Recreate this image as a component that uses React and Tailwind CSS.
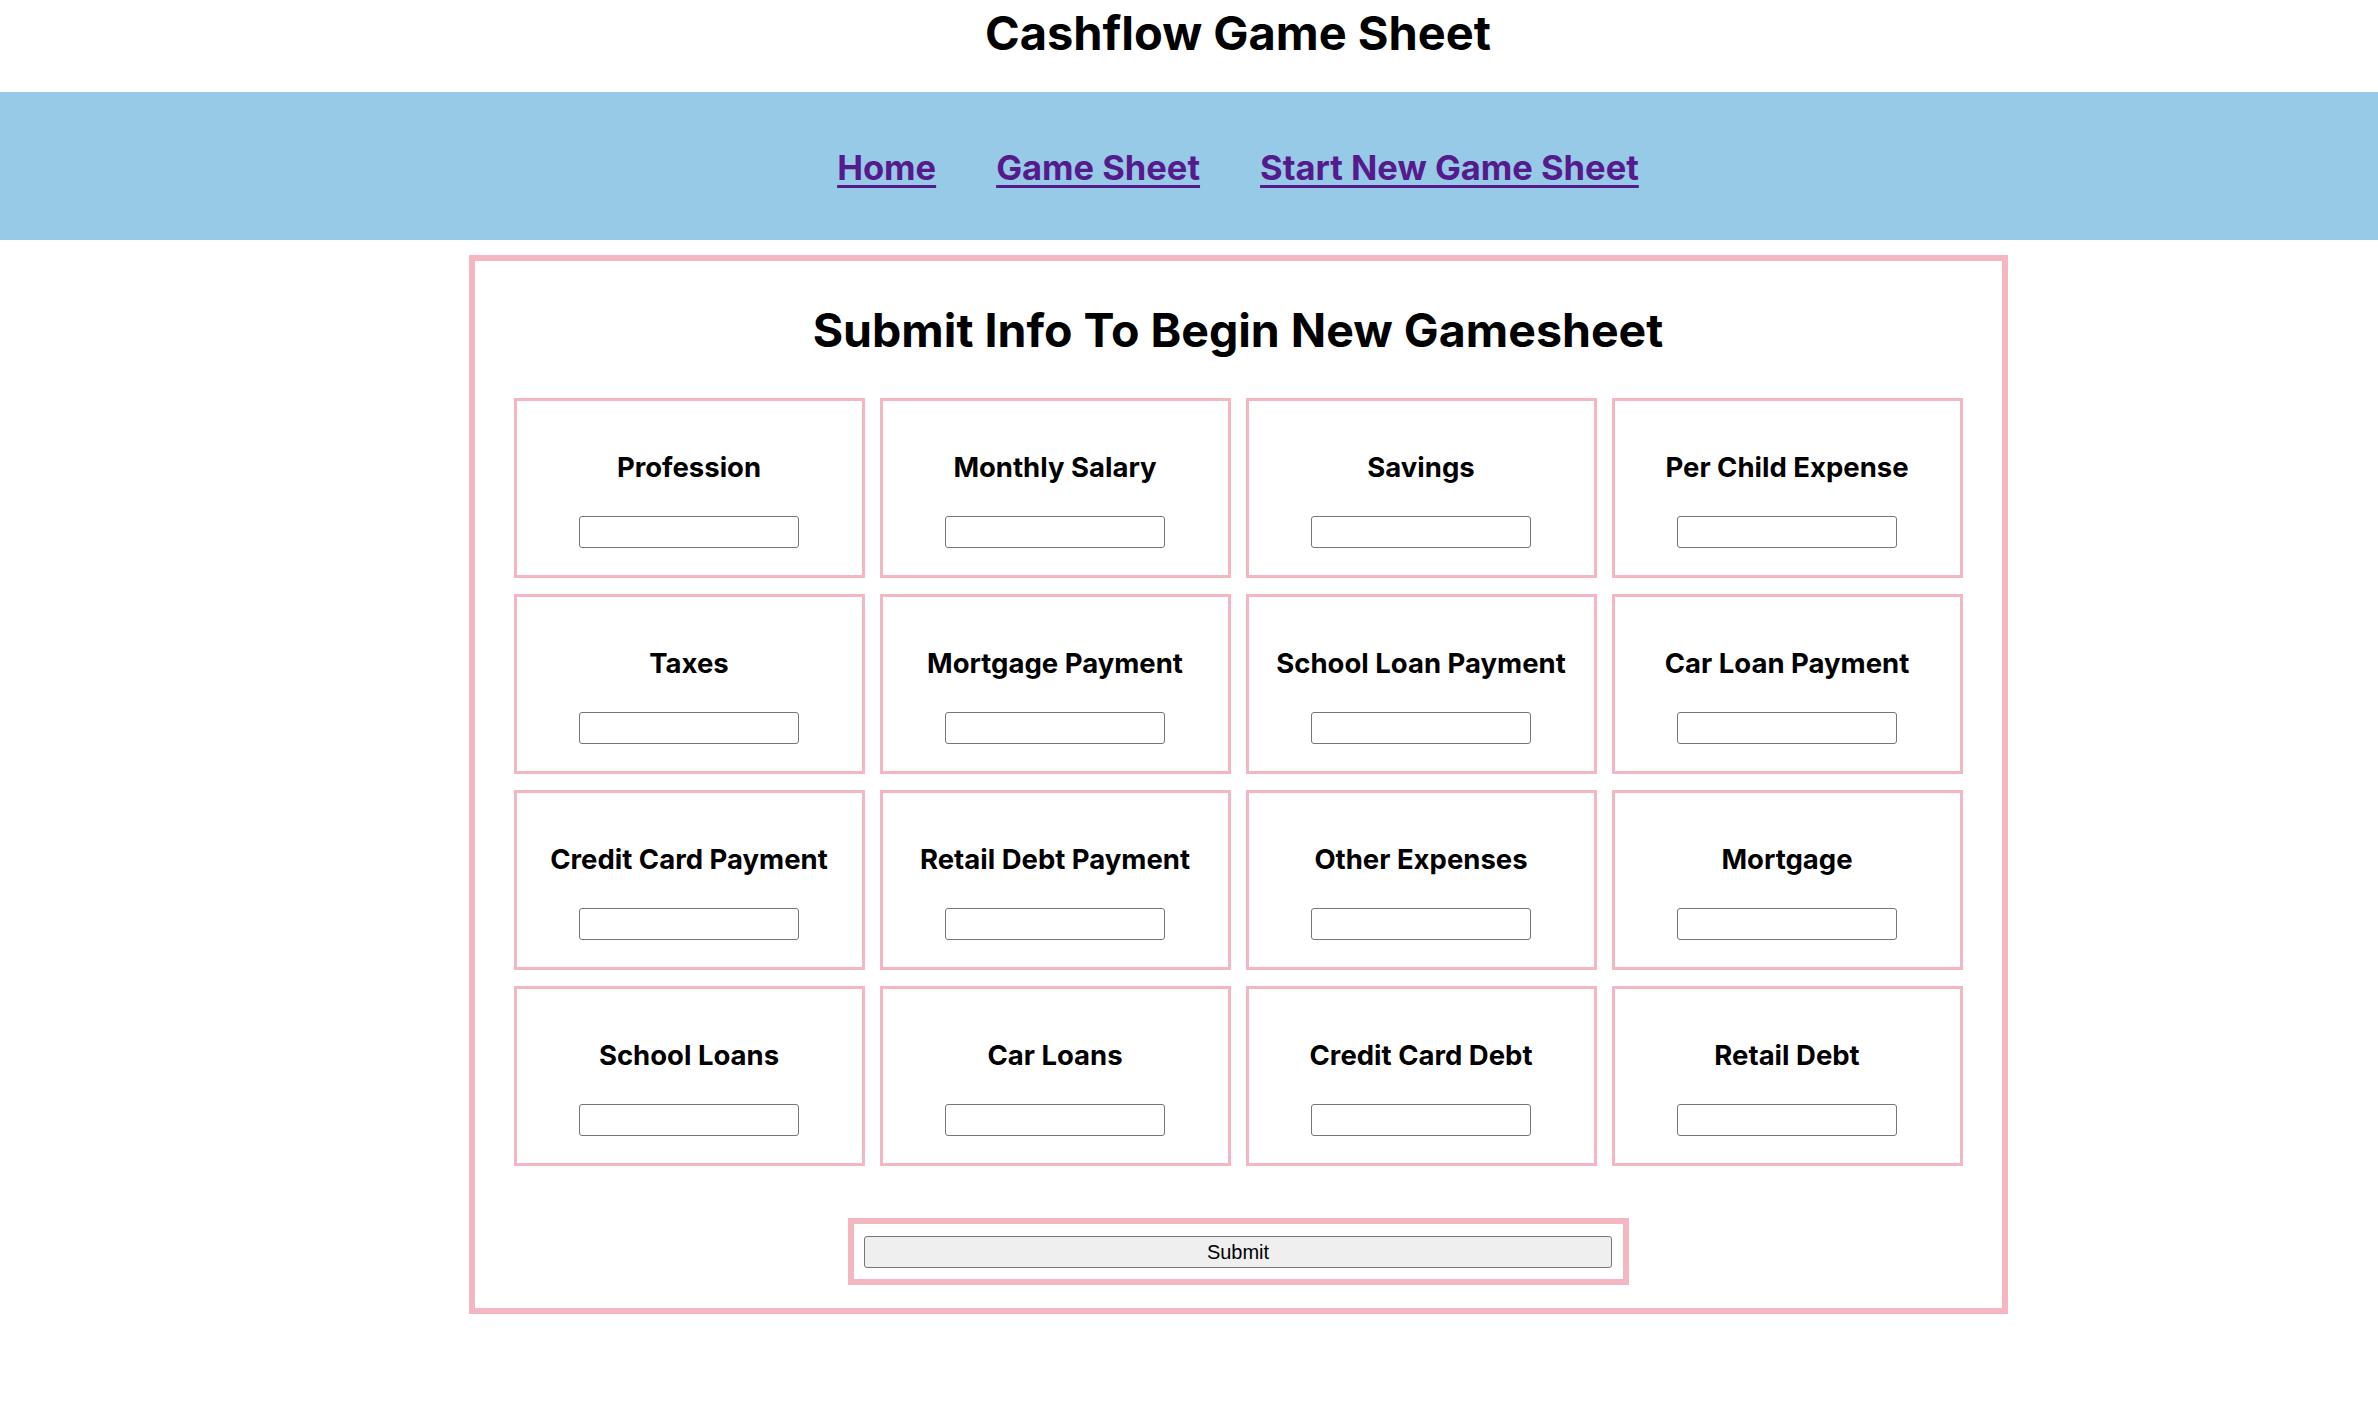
import { useState } from 'react';

const fields = [
  'Profession',
  'Monthly Salary',
  'Savings',
  'Per Child Expense',
  'Taxes',
  'Mortgage Payment',
  'School Loan Payment',
  'Car Loan Payment',
  'Credit Card Payment',
  'Retail Debt Payment',
  'Other Expenses',
  'Mortgage',
  'School Loans',
  'Car Loans',
  'Credit Card Debt',
  'Retail Debt',
];

export default function App() {
  const [values, setValues] = useState({});

  const links = ['Home', 'Game Sheet', 'Start New Game Sheet'];

  return (
    <div className="min-h-screen w-full overflow-hidden bg-white text-black font-['Inter',sans-serif]">
      <div className="w-[2476px]">
        {/* Title */}
        <div className="h-[92px] pt-[9px]">
          <h1 className="text-center text-[47px] font-bold leading-none">Cashflow Game Sheet</h1>
        </div>

        {/* Nav */}
        <nav className="h-[148px] bg-[#97cae7] flex items-center justify-center gap-[60px] pt-[4px]">
          {links.map(label => (
            <a
              key={label}
              href="#"
              className="text-[34.5px] font-bold leading-none text-[#551a8b] underline underline-offset-[5px] decoration-[3px]"
            >
              {label}
            </a>
          ))}
        </nav>

        {/* Form */}
        <form
          className="mx-auto mt-[15px] w-[1539px] border-[6px] border-[#f4b7c2] pt-[46px] pb-[23px]"
          onSubmit={e => e.preventDefault()}
        >
          <h2 className="text-center text-[46.5px] font-bold leading-none">Submit Info To Begin New Gamesheet</h2>

          <div className="mt-[44px] px-[39px] grid grid-cols-4 gap-x-[15px] gap-y-[16px]">
            {fields.map(f => (
              <div key={f} className="h-[180px] border-[3px] border-[#f4b7c2] flex flex-col items-center pt-[53px]">
                <h3 className="text-[27.5px] font-bold leading-none">{f}</h3>
                <input
                  type="text"
                  value={values[f] || ''}
                  onChange={e => setValues({ ...values, [f]: e.target.value })}
                  className="mt-[35px] w-[220px] h-[32px] border border-[#767676] rounded-[3px] bg-white"
                />
              </div>
            ))}
          </div>

          <div className="mx-auto mt-[52px] w-[781px] border-[6px] border-[#f4b7c2] pt-[12px] pb-[11px] flex justify-center">
            <button
              type="submit"
              className="w-[748px] h-[32px] bg-[#efefef] border border-[#767676] rounded-[3px] text-[20px] font-['Liberation_Sans',sans-serif] leading-none"
            >
              Submit
            </button>
          </div>
        </form>
      </div>
    </div>
  );
}
